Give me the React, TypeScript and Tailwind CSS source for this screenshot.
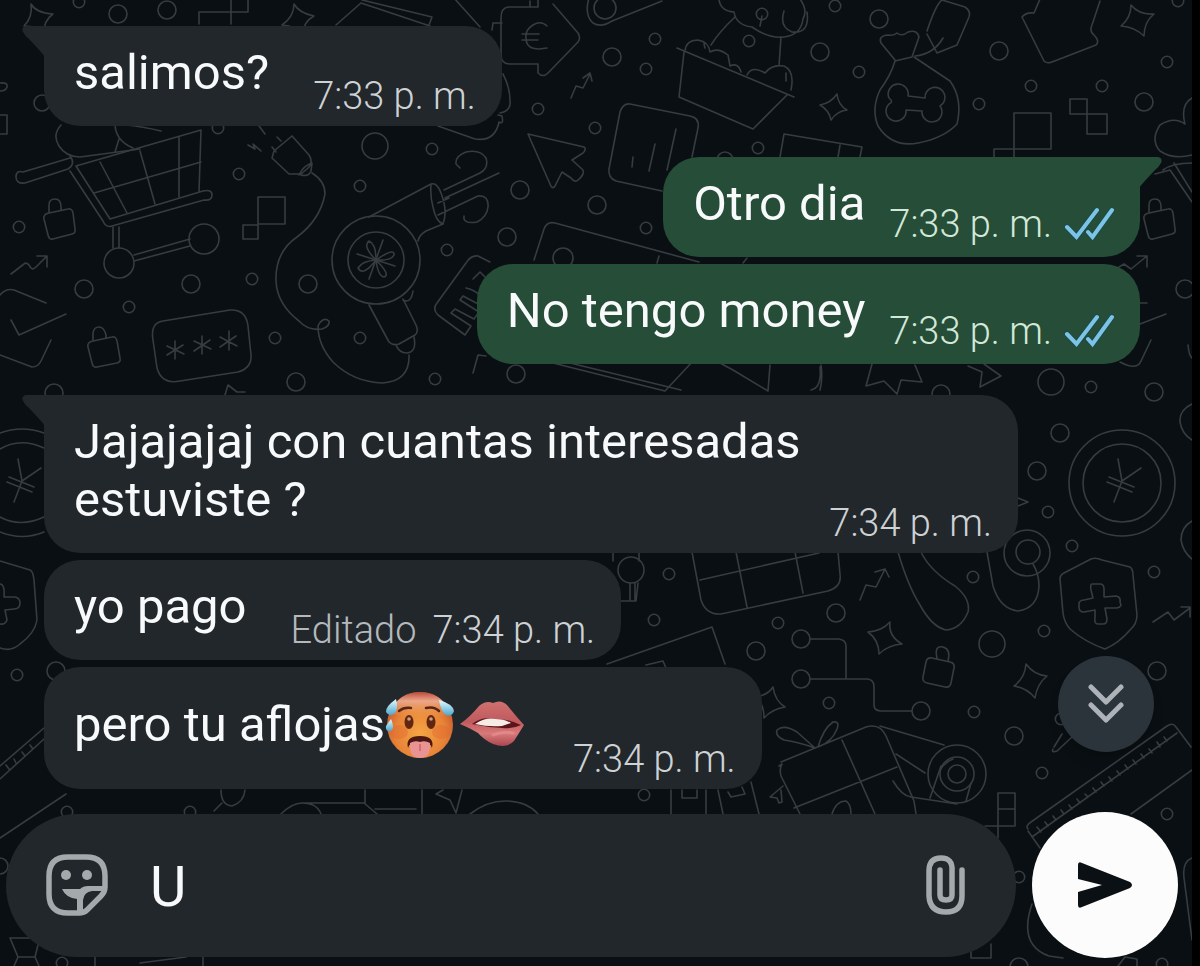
import { useState, type ReactNode } from "react";

const SMALL_DOTS: [number, number][] = [
  [239, 174], [360, 186], [19, 227], [129, 307], [252, 279], [275, 338], [360, 338], [432, 149], [595, 128], [538, 109],
  [655, 39], [646, 69], [762, 14], [749, 41], [758, 148], [646, 228], [447, 250], [435, 379], [835, 6], [859, 72], [979, 104],
  [1031, 86], [1102, 86], [1167, 62], [1178, 1], [1091, 387], [1048, 512], [1072, 546], [1154, 572], [1044, 631], [669, 574],
  [654, 620], [778, 623], [829, 703], [974, 712], [973, 577], [1042, 773], [1167, 814], [17, 675], [67, 812], [190, 812],
  [79, 2], [218, 128], [644, 795], [62, 963], [1019, 877], [1162, 964], [1061, 719],
];

const LARGE_DOTS: [number, number, number][] = [
  [118, 14, 9], [167, 10, 9], [84, 289, 9], [191, 284, 9], [308, 284, 9], [296, 382, 9], [54, 393, 9], [375, 146, 13],
  [520, 190, 9], [507, 237, 9], [597, 205, 9], [612, 57, 9], [516, 374, 9], [563, 258, 10], [820, 52, 9], [879, 19, 9],
  [999, 51, 9], [1144, 102, 9], [1185, 289, 9], [1051, 382, 13], [1154, 392, 9], [941, 394, 9], [1060, 433, 9], [1037, 471, 9],
  [992, 644, 13], [836, 613, 9], [756, 651, 9], [1014, 736, 9], [1157, 671, 9], [56, 671, 9], [725, 160, 8],
  [801, 639, 9], [801, 679, 9], [921, 711, 9], [631, 570, 13], [1019, 967, 9], [0, 866, 8], [42, 103, 8],
];

const DOODLES: string[] = [
  // sparkles
  "M31 4q5 9 22 10q-10 7-9 20q-6-8-20-8q9-9 7-22z",
  "M294 4q5 9 20 12q-11 6-11 18q-7-8-21-9q12-8 12-21z",
  "M1131 5q8 10 23 9q-10 8-10 22q-9-9-23-10q10-8 10-21z",
  "M837 94q1 11 10 16q-10 1-16 10q-2-10-11-15q11-2 17-11z",
  "M890 622q-2 14 12 22q-14 1-23 10q0-14-11-22q14-1 22-10z",
  "M1026 664q8 11 21 12q-10 8-12 22q-8-10-21-12q11-8 12-22z",
  "M773 687q2 14 12 20q-13 2-21 11q0-14-8-21q12-2 17-10z",
  // stepped squares
  "M199 24V12H248V-2M231-2V24M258 197H285V224H258zM243 225H258V239H243z",
  "M1014 113H1051V149H1014zM994 157V149H1014V157M1070 99H1087V114H1070zM1087 114H1107V134H1087z",
  "M998 793H1015V826H998zM998 809H1015M985 826H998V838M971 946V958H991V944",
  "M0 115H7V134H0M0 83Q8 82 7 87Q6 91 0 91",
  // shopping cart
  "M76 166L201 130L199 192M76 166L110 219L203 191Q212 189 212 195T204 200L112 226Q106 228 103 221L70 171",
  "M100 162L127 213M140 151L155 204M179 137V197M94 193L201 162M70 156Q76 164 68 169L25 183Q16 184 16 177T23 172L70 158",
  "M113 227V248M119 227V248M134 255L190 239M134 261L190 246M61 125Q52 135 59 146T80 157L140 149M115 125Q116 141 133 148M115 152L119 139M126 125Q145 127 161 131",
  // padlocks
  "M49 213L68 209Q72 208 73 213L75 229Q76 233 72 234L53 239Q49 240 48 235L44 219Q43 214 49 213M49 212V205Q49 199 55 199T61 207V210",
  "M93 341L112 337Q116 336 117 341L120 358Q121 362 117 363L97 367Q93 368 92 363L88 347Q87 342 93 341M93 340V333Q94 327 99 327T106 335V338",
  "M1149 213L1168 209Q1172 208 1173 213L1175 229Q1176 233 1172 234L1153 239Q1149 240 1148 235L1144 219Q1143 214 1149 213M1149 212V205Q1149 199 1155 199T1161 207V210",
  "M932 658L950 662Q955 663 954 668L951 683Q950 688 945 687L927 683Q922 682 923 677L926 662Q927 657 932 658M937 658Q934 645 943 647Q951 649 948 661",
  // trend arrows
  "M11 274L24 264Q27 261 31 268Q33 270 36 267L47 256M37 256H47V267",
  "M571 98L576 86L583 88L590 74M583 78L590 73L592 81",
  "M1119 267L1124 264L1131 269L1147 256M1137 256H1147V267",
  "M860 600L866 585L876 587L885 569M875 572L885 569L889 577",
  "M1153 622L1168 612L1174 620L1190 608M1181 607L1190 607V617",
  // envelope and folders at the left edge
  "M0 295Q6 288 14 290L46 303M11 320L19 335L66 314M0 355L32 367Q38 367 41 361L51 340",
  "M1140 303L1147 303M1140 324L1166 314M1120 362Q1137 371 1141 361L1151 340M1188 345Q1189 356 1192 358",
  // passcode box
  "M163 321L230 310Q246 309 248 326L251 355Q252 368 238 372L180 381Q162 385 157 368L153 340Q150 323 163 321",
  "M175 341V359M167 346L184 354M183 345L167 355M202 336V354M194 341L211 349M210 340L194 351M229 331V350M220 337L237 346M236 336L220 347",
  // plug and cable
  "M292 136L309 155Q314 163 307 169L301 174H289L272 158L274 151L292 136M281 141L277 137M276 152L272 147M299 175Q303 166 312 163L311 171Q309 177 301 175M248 145L255 149L253 144L261 151M259 126L265 134",
  "M312 173Q325 181 325 194Q320 220 297 237Q275 252 276 281Q277 304 299 321Q308 331 322 329Q330 326 329 321Q323 316 318 326Q318 345 333 362Q353 382 383 383Q410 381 409 355",
  // hair dryer
  "M369 217L431 184Q437 182 441 193Q448 211 443 224L426 231Q419 235 418 241M431 184Q430 196 433 207Q436 222 443 224M369 305L389 342Q393 346 399 344L415 335Q419 332 416 325L403 299M396 345Q399 353 407 353Q417 352 414 337M403 300Q411 304 413 291M444 190L480 173Q489 168 486 158Q480 149 466 152Q455 156 456 164L460 168M445 198L499 173M438 215L478 196Q489 195 488 207Q487 217 477 222Q466 224 464 219V216M438 203L449 198",
  "M357 254L395 266M383 240L369 279",
  "M376 260Q362 246 369 241Q376 244 376 260Q395 247 394 255Q391 261 376 260Q391 275 384 277Q378 276 376 260Q363 277 358 268Q362 261 376 260",
  // euro label
  "M508 7H538V-2M530 1V7H508Q501 8 501 18V55Q501 64 510 64H538V73Q543 78 548 73L578 42Q581 38 578 33L553 4M502 23H493L492 30M454-2L480 27M547 26Q541 20 533 25T526 38Q526 49 539 49L547 48M522 34H539M522 40H538M503 74Q511 89 510 105Q508 112 500 113",
  "M336 25L361 3L430 26M362 0L432 17L429 25M438 126L475 139Q495 142 499 122Q504 125 502 116L498 115",
  // key
  "M589-2Q584 15 593 23Q601 28 612 21L662 1",
  // cursor
  "M528 134L584 147Q587 149 583 153L572 160L583 170Q585 174 578 180Q575 183 571 178L562 172L555 186Q552 190 550 184z",
  // bar chart card
  "M630 104L690 116Q700 118 698 128L692 157M662 191L616 181Q608 178 609 169L620 112Q623 103 630 104M633 157L632 167M655 144L649 171M676 129L667 170",
  // money note
  "M534 260L544 229Q547 221 555 223L699 262M659 256L657 263M747 258L743 263",
  "M490 262L478 256Q471 255 466 263L437 303Q432 309 438 315L465 335L471 326L451 313L455 309L474 319L479 312L460 300L463 296L482 306M466 288Q475 290 482 297M473 279L480 272L486 278",
  "M473 373L478 355L486 356M553 363L665 391L694 360M570 363L681 390M720 363L733 370L768 391L770 365",
  // cupcake box
  "M677 48L794 97M684 52L679 97L753 129L787 95M685 51Q686 40 698 40Q709 42 710 52Q718 47 728 55L730 66Q738 62 741 72M747 75Q752 65 765 73Q772 64 784 66Q795 71 791 90M711 45Q719 32 735 17M781 37L779 66M704 44L705 48M786 73V81",
  "M719-1Q720 11 734 12Q736 25 752 27Q769 39 784 37Q801 35 803 19Q808 10 800-1M760 26L762 16M784 11Q779 27 792 32Q810 34 807 12",
  "M780 157L784 134L862 147L860 157M840 145L838 157",
  // money bag with tag
  "M895 60L881 43Q878 36 888 35Q894 36 897 33Q902 37 908 32Q917 29 919 37L912 57L895 61Q891 75 880 90Q871 109 878 126Q892 148 918 143Q944 138 957 124Q963 99 950 81L914 57",
  "M915 56Q934 54 943 38M927 31Q936 4 942 0L965 7Q971 11 969 17L957 45L937 53L927 34",
  "M889 98A10 10 0 1 1 908 96L925 98A10 10 0 1 1 940 106A10 10 0 1 1 922 111L906 110A10 10 0 1 1 889 104Q894 102 889 98",
  // hanging house tag
  "M1040-1L1034 13Q1026 12 1022 17L1044 61Q1047 64 1052 62L1096 45Q1100 41 1094 35Q1089 31 1092 25L1100 1",
  // flower at the right edge
  "M1192 98Q1180 105 1185 124Q1174 116 1160 125Q1150 140 1160 151Q1173 160 1192 155M1155 174L1170 170L1192 202M1174 163L1192 192M1163 170Q1172 163 1192 163",
  // coins
  "M1118 459L1122 481L1141 468M1122 481L1114 502M1109 477L1134 487M1107 482L1132 492",
  "M18 459L22 481L41 468M22 481L14 502M9 477L34 487M7 482L32 492M44 433Q22 425 0 433M44 448Q20 437 0 449M44 517Q20 528 0 517M44 532Q22 541 0 532",
  "M1192 404Q1179 410 1180 422Q1182 434 1192 440M1192 521Q1181 527 1181 540Q1183 552 1192 559M1018 498L1028 502L1018 506",
  // health shield
  "M1091 559Q1096 557 1102 560L1130 567Q1133 569 1133 575L1137 615Q1137 624 1130 630Q1119 643 1105 649Q1085 642 1070 629Q1064 622 1063 613L1060 579Q1060 575 1064 573z",
  "M1092 584L1101 584Q1104 585 1104 589V597L1116 596Q1121 597 1120 602L1121 605Q1120 608 1116 608L1105 608L1107 619Q1107 624 1103 624H1098Q1094 624 1095 618V610L1084 612Q1079 612 1079 607V603Q1080 600 1084 600L1093 598L1091 590Q1090 584 1092 584",
  "M0 561L30 570Q33 571 34 580L37 620Q35 633 20 644Q11 652 0 648M0 584Q5 584 4 597L15 597Q20 598 20 603Q20 609 14 609L5 610L7 620Q5 625 0 624",
  // keyhole lamp and drawers
  "M630 583V600M635 583V600M620 601H636L638 583M613 561V553M639 561V552M607 664L712 627L725 664M646 665L663 661L666 668",
  "M692 552L701 600Q706 615 721 614L828 591Q842 587 840 574L838 552M736 552L747 607M795 552L803 593M700 580L819 553",
  // ribbon
  "M898 552Q908 586 920 605Q932 627 946 630Q961 629 968 612Q971 599 955 586Q930 571 921 552",
  "M987 552L993 586Q1000 609 1018 611Q1038 608 1039 586Q1039 574 1033 564",
  // circuit
  "M810 639H839Q846 640 846 646V678M810 679H868Q874 680 874 687V706Q875 711 881 711H912",
  // gift
  "M781 762L866 727Q880 723 886 736L914 801L916 814M779 766L782 764Q779 769 781 776L800 814M794 808L897 767M842 740L875 814M815 748Q798 742 784 740Q775 736 777 730Q784 724 797 732L815 748M818 747Q823 729 833 722Q840 721 837 729Q832 742 818 747M832 814Q836 801 846 801Q851 804 851 814M781 790L782 802L779 803L777 798L770 797L783 786",
  // tape
  "M880 726L944 745M896 754L925 773M893 781Q902 796 911 797L957 804M940 770Q945 762 953 759M941 766L930 798M971 783L966 801",
  // ruler
  "M1028 829Q1025 826 1031 822L1167 726Q1173 722 1176 727L1191 747M1032 837L1177 733M1028 831L1040 848M1131 814L1192 770M1037 827L1041 832M1045 822L1048 826M1053 816L1056 820M1061 810L1064 814M1069 805L1072 809M1077 799L1080 803M1085 794L1088 797M1093 788L1096 792M1101 782L1104 786M1109 777L1112 781M1117 771L1120 775M1125 765L1128 769M1133 760L1136 764M1141 754L1144 758M1149 749L1152 753M1157 742L1160 747M1164 737L1167 741",
  "M1053 749Q1051 753 1057 751L1072 737M1054 747L1062 734",
  "M0 766L44 728M0 779L44 739M6 765L9 769M14 759L16 763M22 752L25 756M30 745L33 749M0 838L66 794",
  // scraps between the bubbles and the composer
  "M221 790Q221 805 232 806Q244 802 245 790M222 803L214 811M281 814Q292 803 302 803Q317 803 321 814M302 803H364L377 814M365 790V803M375 809H416M422 790V814M443 790L436 794L450 800L456 813L462 790M470 814Q488 800 508 801T538 814M671 790V814M706 790V814M682 790V798H697V790M718 790L723 814M751 782L759 814M728 792L731 797L745 794L742 787",
  "M225 395L228 385L237 392H245M820 390Q823 378 821 365M811 390Q822 388 820 367M872 364L866 386L884 381L897 394L901 380L922 382L915 365M968 366L982 372L980 387L1001 376L984 364",
  // lower corner
  "M10 938H38V945L35 957L39 966M10 938L18 957L14 966M18 957H35M95 957V966M203 957V966M140 963L186 957",
  "M1032 904Q1018 945 1049 956L1063 958M1192 858Q1182 862 1184 878L1192 940M1118 966L1125 957L1137 959V966",
];

function Wallpaper() {
  return (
    <svg
      aria-hidden="true"
      viewBox="0 0 1192 966"
      preserveAspectRatio="xMinYMin slice"
      className="pointer-events-none absolute inset-0 h-full w-full text-[#373c40]"
      fill="none"
      stroke="currentColor"
      strokeWidth="1.6"
      strokeLinecap="round"
      strokeLinejoin="round"
    >
      {SMALL_DOTS.map(([x, y]) => (
        <circle key={`${x}-${y}`} cx={x} cy={y} r="5.7" />
      ))}
      {LARGE_DOTS.map(([x, y, r]) => (
        <circle key={`${x}-${y}`} cx={x} cy={y} r={r} />
      ))}
      <circle cx="119" cy="263" r="15" />
      <circle cx="204" cy="239" r="15" />
      <circle cx="376" cy="260" r="44" />
      <circle cx="376" cy="260" r="28" />
      <circle cx="605" cy="8" r="11" />
      <circle cx="1122" cy="483" r="53" />
      <circle cx="1122" cy="483" r="39" />
      <circle cx="1027" cy="553" r="23" />
      <circle cx="1028" cy="552" r="12" />
      <circle cx="957" cy="774" r="29" />
      <circle cx="957" cy="774" r="17" />
      <circle cx="957" cy="774" r="9" />
      {DOODLES.map((d) => (
        <path key={d} d={d} />
      ))}
    </svg>
  );
}

function ReadTicks() {
  return (
    <svg role="img" aria-label="Leído" viewBox="0 0 50 34" className="h-[34px] w-[50px] shrink-0" fill="none">
      <g stroke="#1d4a4a" strokeWidth="6" strokeLinejoin="round" strokeLinecap="round">
        <path d="M3 20L12.500 30L33 3M24 25L28.500 30L48 3" />
      </g>
      <g stroke="#7cc4e6" strokeWidth="4" strokeLinecap="round">
        <path d="M3 20L12.500 30L33 3M24 25L28.500 30L48 3" />
      </g>
    </svg>
  );
}

function HotFace() {
  return (
    <svg role="img" aria-label="🥵" viewBox="0 0 70 68" className="h-[68px] w-[70px]">
      <defs>
        <radialGradient id="face" cx="50%" cy="62%" r="58%">
          <stop offset="0" stopColor="#f4a545" />
          <stop offset="0.650" stopColor="#e88437" />
          <stop offset="1" stopColor="#c8592f" />
        </radialGradient>
        <linearGradient id="brow" x1="0" y1="0" x2="0" y2="1">
          <stop offset="0" stopColor="#b9493a" />
          <stop offset="0.350" stopColor="#efae93" stopOpacity="0.900" />
          <stop offset="1" stopColor="#f0a050" stopOpacity="0" />
        </linearGradient>
        <linearGradient id="drop" x1="0" y1="0" x2="0" y2="1">
          <stop offset="0" stopColor="#e8fbff" />
          <stop offset="1" stopColor="#4aa9d0" />
        </linearGradient>
      </defs>
      <circle cx="35" cy="34" r="33" fill="url(#face)" />
      <path d="M5 21Q14 1 35 1T65 21Q59 28 35 27T5 21z" fill="url(#brow)" />
      <ellipse cx="14" cy="41" rx="9" ry="7" fill="#e0622f" opacity="0.350" />
      <ellipse cx="56" cy="41" rx="9" ry="7" fill="#e0622f" opacity="0.350" />
      <path d="M14 20Q19 16 26 17M41 17Q49 15 54 20" fill="none" stroke="#5a2514" strokeWidth="2.500" strokeLinecap="round" />
      <ellipse cx="24" cy="31" rx="4.500" ry="7" fill="#61260f" />
      <ellipse cx="46" cy="31" rx="4.500" ry="7" fill="#61260f" />
      <circle cx="24" cy="28" r="1.800" fill="#d59a80" />
      <circle cx="46" cy="28" r="1.800" fill="#d59a80" />
      <path d="M23 57Q20 45 35 45T47 57Q44 49 35 49T23 57z" fill="#4a1712" />
      <path d="M24 54Q26 46 35 46T46 54Z" fill="#4a1712" />
      <path d="M25 52Q30 49 35 51Q40 49 45 52V58Q44 67 35 67T25 58z" fill="#ea9393" />
      <path d="M35 53V60" stroke="#cf6265" strokeWidth="1.500" />
      <path d="M11 8Q14 18 9 23Q4 26 1 21Q0 16 11 8z" fill="url(#drop)" />
      <path d="M54 9Q68 13 69 20Q67 26 61 24Q56 21 54 9z" fill="url(#drop)" />
      <path d="M6 28Q10 37 6 40Q0 41 1 35z" fill="url(#drop)" />
    </svg>
  );
}

function Lips() {
  return (
    <svg role="img" aria-label="🫦" viewBox="0 0 70 68" className="h-[68px] w-[70px]">
      <defs>
        <linearGradient id="lip" x1="0" y1="0" x2="0" y2="1">
          <stop offset="0" stopColor="#cf7070" />
          <stop offset="0.450" stopColor="#c05a5e" />
          <stop offset="0.720" stopColor="#d87a7a" />
          <stop offset="1" stopColor="#a94650" />
        </linearGradient>
      </defs>
      <path d="M1 33Q11 26 20 15Q27 9 34 12Q42 8 48 14Q56 24 65 34Q60 42 55 50Q48 58 34 53Q25 49 19 42Q11 37 1 33z" fill="url(#lip)" />
      <path d="M13 33Q23 25 35 28Q47 27 62 34Q54 38 43 37Q27 36 13 33z" fill="#5b1419" />
      <path d="M16 33Q27 26 36 28Q46 28 52 32L43 35Q29 36 16 33z" fill="#f6ece6" />
      <path d="M34 44Q44 40 54 42" stroke="#e99293" strokeWidth="3" strokeLinecap="round" opacity="0.600" fill="none" />
    </svg>
  );
}

type BubbleProps = {
  children: ReactNode;
  time: string;
  outgoing?: boolean;
  first?: boolean;
  edited?: boolean;
  long?: boolean;
};

function Bubble({ children, time, outgoing = false, first = false, edited = false, long = false }: BubbleProps) {
  return (
    <li
      className={
        "relative flex max-w-[974px] rounded-[36px] pt-[18px] pr-[26px] pl-[30px] " +
        (outgoing ? "self-end bg-[#254d38] " : "self-start bg-[#22272b] ") +
        (outgoing || long ? "gap-6 " : "gap-11 ") +
        (first ? (outgoing ? "mt-6 rounded-tr-none first:mt-0" : "mt-6 rounded-tl-none first:mt-0") : "")
      }
    >
      {first && (
        <svg
          aria-hidden="true"
          viewBox="0 0 23 32"
          className={
            "absolute top-0 h-8 w-[23px] " +
            (outgoing ? "-right-[22px] -scale-x-100 text-[#254d38]" : "-left-[22px] text-[#22272b]")
          }
        >
          <path d="M23 0H4Q-1 1 1 6Q3 10 7 13L19 26Q22 29 23 32z" fill="currentColor" />
        </svg>
      )}
      <p className="mb-6 flex min-w-0 flex-1 items-center text-[49px] leading-[58px] text-[#f7f9fa]">{children}</p>
      <div
        className={
          "flex shrink-0 items-center self-end text-[38px] leading-[44px] font-light whitespace-nowrap " +
          (outgoing ? "mb-[11px] gap-3 text-[#d3e8d8]" : "mb-2 gap-4 text-[#ced2d5]")
        }
      >
        {edited && <span className="text-[#b4b9bd]">Editado</span>}
        <time>{time}</time>
        {outgoing && <ReadTicks />}
      </div>
    </li>
  );
}

function StickerIcon() {
  return (
    <svg aria-hidden="true" viewBox="0 0 62 62" className="h-[62px] w-[62px]" fill="none">
      <path
        d="M22 3H40Q59 3 59 22V33Q59 38 55 42L41 56Q38 59 33 59H22Q3 59 3 40V22Q3 3 22 3z"
        stroke="#a4a9ac"
        strokeWidth="5.500"
      />
      <circle cx="20" cy="21" r="5" fill="#a4a9ac" />
      <circle cx="41" cy="21" r="5" fill="#a4a9ac" />
      <path d="M16 35H34Q37 32 42 32H57V37H46Q38 38 37 46V57H31V45Q20 44 16 35z" fill="#a4a9ac" />
    </svg>
  );
}

function ClipIcon() {
  return (
    <svg aria-hidden="true" viewBox="0 0 40 62" className="h-[62px] w-10" fill="none">
      <path
        d="M36 16V42Q36 58 20 58T3 42V17Q3 4 15 4T26 17V41Q26 46 20 46T14 41V16"
        stroke="#a4a9ac"
        strokeWidth="5.500"
        strokeLinecap="round"
      />
    </svg>
  );
}

export default function App() {
  const [draft, setDraft] = useState("U");

  return (
    <main className="relative flex min-h-screen flex-col overflow-hidden border-r-8 border-black bg-[#0a0f13] pt-[26px] font-['Roboto',sans-serif]">
      <Wallpaper />
      <ol className="relative flex flex-1 flex-col gap-[7px] pr-[52px] pl-11">
        <Bubble first time="7:33 p. m.">salimos?</Bubble>
        <Bubble first outgoing time="7:33 p. m.">Otro dia</Bubble>
        <Bubble outgoing time="7:33 p. m.">No tengo money</Bubble>
        <Bubble first long time="7:34 p. m.">Jajajajaj con cuantas interesadas estuviste ?</Bubble>
        <Bubble edited time="7:34 p. m.">yo pago</Bubble>
        <Bubble time="7:34 p. m.">
          <span>pero tu aflojas</span>
          <span className="flex h-20 items-center gap-1">
            <HotFace />
            <Lips />
          </span>
        </Bubble>
      </ol>
      <form
        className="relative flex items-center gap-4 pt-[22px] pr-[14px] pb-2 pl-[6px]"
        onSubmit={(event) => event.preventDefault()}
      >
        <button
          type="button"
          aria-label="Ir al final"
          className="absolute right-[38px] bottom-[214px] flex size-24 items-center justify-center rounded-full bg-[#2c343b] shadow-lg"
        >
          <svg
            aria-hidden="true"
            viewBox="0 0 36 40"
            className="h-10 w-9"
            fill="none"
            stroke="#adb3b8"
            strokeWidth="5"
            strokeLinecap="round"
            strokeLinejoin="round"
          >
            <path d="M3 3L18 18L33 3M3 21L18 36L33 21" />
          </svg>
        </button>
        <div className="flex h-[143px] min-w-0 flex-1 items-center rounded-full bg-[#22272b] pr-[50px] pl-10">
          <button type="button" aria-label="Stickers" className="shrink-0">
            <StickerIcon />
          </button>
          <input
            aria-label="Mensaje"
            value={draft}
            onChange={(event) => setDraft(event.target.value)}
            className="ml-[42px] min-w-0 flex-1 bg-transparent pt-1 text-[56px] leading-[64px] text-[#f7f9fa] outline-none"
          />
          <button type="button" aria-label="Adjuntar" className="shrink-0">
            <ClipIcon />
          </button>
        </div>
        <button
          type="submit"
          aria-label="Enviar"
          className="flex size-[146px] shrink-0 items-center justify-center rounded-full bg-[#fcfcfc]"
        >
          <svg aria-hidden="true" viewBox="0 0 54 46" className="h-[46px] w-[54px] text-[#0b1014]" fill="currentColor">
            <path d="M0 3Q0-1 4 1L52 20Q56 23 52 26L4 45Q0 47 0 43V30L24 23L0 17z" />
          </svg>
        </button>
      </form>
    </main>
  );
}
